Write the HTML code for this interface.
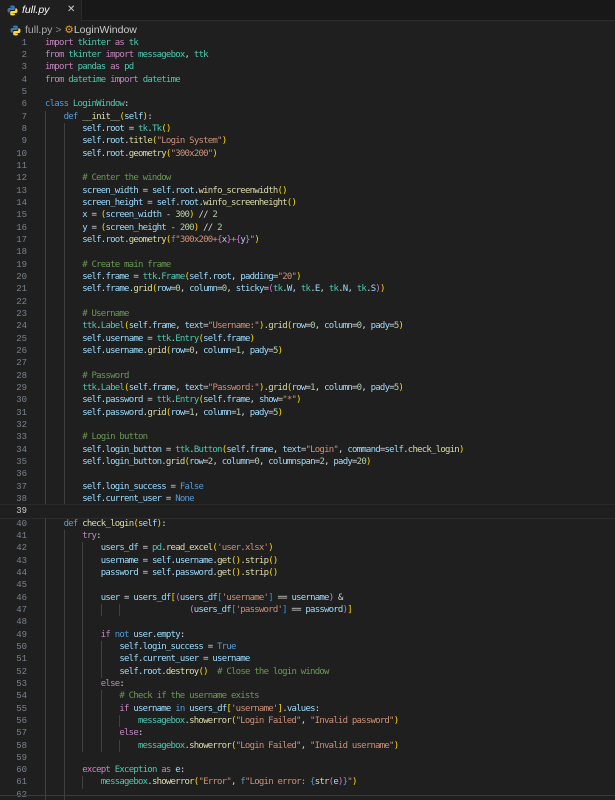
<!DOCTYPE html>
<html><head><meta charset="utf-8"><style>
*{margin:0;padding:0;box-sizing:border-box}
html,body{width:615px;height:800px;overflow:hidden;background:#1f1f1f}
body{font-family:"DejaVu Sans Mono","Liberation Mono",monospace;font-size:9px;letter-spacing:-0.77px;color:#d4d4d4;position:relative}
.tabs{position:absolute;left:0;top:0;width:615px;height:21px;background:#181818;border-bottom:1px solid #2b2b2b}
.tab{position:absolute;left:0;top:0;width:82px;height:22px;background:#1f1f1f;border-right:1px solid #2b2b2b;font-family:"Liberation Sans",sans-serif;font-style:italic;font-size:10.5px;letter-spacing:0;color:#fff}
.tab span{position:absolute;left:22px;top:4px}
.tab b{position:absolute;left:67px;top:4px;font-style:normal;font-weight:normal;color:#ccc;font-size:10px}
.crumb{position:absolute;left:10px;top:24px;font-family:"Liberation Sans",sans-serif;font-size:10.5px;letter-spacing:0;color:#a9a9a9}
.code{position:absolute;left:0;top:36.8px;width:615px}
.l{height:12.34px;line-height:12.34px;white-space:pre;position:relative}
.l.cur{outline:1px solid #2b2b2b}
.n{display:inline-block;width:27px;text-align:right;color:#7a828c;margin-right:18px;letter-spacing:0;font-size:9px;font-family:"Liberation Mono",monospace}
.cur .n{color:#ccc}
u{display:inline-block;width:18.6px;height:12.34px;vertical-align:top;text-decoration:none;box-shadow:inset 1px 0 #404040}
.k{color:#c586c0}.b{color:#569cd6}.s{color:#9cdcfe}.f{color:#dcdcaa}.c{color:#4ec9b0}.t{color:#ce9178}.m{color:#6a9955}.nu{color:#b5cea8}.y{color:#ffd700}.p{color:#da70d6}.q{color:#179fff}
.bot{position:absolute;left:0;top:795px;width:615px;height:1px;background:#3a3a3a}
</style></head><body>
<div class="tabs"><div class="tab">
<svg style="position:absolute;left:7px;top:5px" width="11" height="11" viewBox="0 0 11 11"><path d="M5.3 0.5C3 0.5 3.1 1.5 3.1 1.5V2.6H5.4V3H2.1C2.1 3 0.5 2.8 0.5 5.3C0.5 7.7 1.9 7.6 1.9 7.6H2.7V6.4C2.7 6.4 2.6 5 4.1 5H6.4C6.4 5 7.8 5 7.8 3.7V1.7C7.8 1.7 8 0.5 5.3 0.5Z" fill="#3c78aa"/><path d="M5.7 10.5C8 10.5 7.9 9.5 7.9 9.5V8.4H5.6V8H8.9C8.9 8 10.5 8.2 10.5 5.7C10.5 3.3 9.1 3.4 9.1 3.4H8.3V4.6C8.3 4.6 8.4 6 6.9 6H4.6C4.6 6 3.2 6 3.2 7.3V9.3C3.2 9.3 3 10.5 5.7 10.5Z" fill="#fdd835"/></svg>
<span>full.py</span><b>✕</b></div></div>
<div class="crumb"><svg style="position:absolute;left:0;top:1px" width="11" height="11" viewBox="0 0 11 11"><path d="M5.3 0.5C3 0.5 3.1 1.5 3.1 1.5V2.6H5.4V3H2.1C2.1 3 0.5 2.8 0.5 5.3C0.5 7.7 1.9 7.6 1.9 7.6H2.7V6.4C2.7 6.4 2.6 5 4.1 5H6.4C6.4 5 7.8 5 7.8 3.7V1.7C7.8 1.7 8 0.5 5.3 0.5Z" fill="#3c78aa"/><path d="M5.7 10.5C8 10.5 7.9 9.5 7.9 9.5V8.4H5.6V8H8.9C8.9 8 10.5 8.2 10.5 5.7C10.5 3.3 9.1 3.4 9.1 3.4H8.3V4.6C8.3 4.6 8.4 6 6.9 6H4.6C4.6 6 3.2 6 3.2 7.3V9.3C3.2 9.3 3 10.5 5.7 10.5Z" fill="#fdd835"/></svg><span style="margin-left:15px">full.py</span> <span style="color:#888">&gt;</span> <span style="color:#ee9d28">⚙</span><span style="color:#ccc">LoginWindow</span></div>
<div class="code">
<div class="l"><span class="n">1</span><span class="k">import</span> <span class="c">tkinter</span> <span class="k">as</span> <span class="c">tk</span></div>
<div class="l"><span class="n">2</span><span class="k">from</span> <span class="c">tkinter</span> <span class="k">import</span> <span class="c">messagebox</span>, <span class="c">ttk</span></div>
<div class="l"><span class="n">3</span><span class="k">import</span> <span class="c">pandas</span> <span class="k">as</span> <span class="c">pd</span></div>
<div class="l"><span class="n">4</span><span class="k">from</span> <span class="c">datetime</span> <span class="k">import</span> <span class="c">datetime</span></div>
<div class="l"><span class="n">5</span></div>
<div class="l"><span class="n">6</span><span class="b">class</span> <span class="c">LoginWindow</span>:</div>
<div class="l"><span class="n">7</span><u></u><span class="b">def</span> <span class="f">__init__</span><span class="y">(</span><span class="s">self</span><span class="y">)</span>:</div>
<div class="l"><span class="n">8</span><u></u><u></u><span class="s">self</span>.<span class="s">root</span> = <span class="c">tk</span>.<span class="c">Tk</span><span class="y">()</span></div>
<div class="l"><span class="n">9</span><u></u><u></u><span class="s">self</span>.<span class="s">root</span>.<span class="f">title</span><span class="y">(</span><span class="t">"Login System"</span><span class="y">)</span></div>
<div class="l"><span class="n">10</span><u></u><u></u><span class="s">self</span>.<span class="s">root</span>.<span class="f">geometry</span><span class="y">(</span><span class="t">"300x200"</span><span class="y">)</span></div>
<div class="l"><span class="n">11</span><u></u><u></u></div>
<div class="l"><span class="n">12</span><u></u><u></u><span class="m"># Center the window</span></div>
<div class="l"><span class="n">13</span><u></u><u></u><span class="s">screen_width</span> = <span class="s">self</span>.<span class="s">root</span>.<span class="f">winfo_screenwidth</span><span class="y">()</span></div>
<div class="l"><span class="n">14</span><u></u><u></u><span class="s">screen_height</span> = <span class="s">self</span>.<span class="s">root</span>.<span class="f">winfo_screenheight</span><span class="y">()</span></div>
<div class="l"><span class="n">15</span><u></u><u></u><span class="s">x</span> = <span class="y">(</span><span class="s">screen_width</span> - <span class="nu">300</span><span class="y">)</span> // <span class="nu">2</span></div>
<div class="l"><span class="n">16</span><u></u><u></u><span class="s">y</span> = <span class="y">(</span><span class="s">screen_height</span> - <span class="nu">200</span><span class="y">)</span> // <span class="nu">2</span></div>
<div class="l"><span class="n">17</span><u></u><u></u><span class="s">self</span>.<span class="s">root</span>.<span class="f">geometry</span><span class="y">(</span><span class="b">f</span><span class="t">"300x200+</span><span class="p">{</span><span class="s">x</span><span class="p">}</span><span class="t">+</span><span class="p">{</span><span class="s">y</span><span class="p">}</span><span class="t">"</span><span class="y">)</span></div>
<div class="l"><span class="n">18</span><u></u><u></u></div>
<div class="l"><span class="n">19</span><u></u><u></u><span class="m"># Create main frame</span></div>
<div class="l"><span class="n">20</span><u></u><u></u><span class="s">self</span>.<span class="s">frame</span> = <span class="c">ttk</span>.<span class="c">Frame</span><span class="y">(</span><span class="s">self</span>.<span class="s">root</span>, <span class="s">padding</span>=<span class="t">"20"</span><span class="y">)</span></div>
<div class="l"><span class="n">21</span><u></u><u></u><span class="s">self</span>.<span class="s">frame</span>.<span class="f">grid</span><span class="y">(</span><span class="s">row</span>=<span class="nu">0</span>, <span class="s">column</span>=<span class="nu">0</span>, <span class="s">sticky</span>=<span class="p">(</span><span class="c">tk</span>.<span class="s">W</span>, <span class="c">tk</span>.<span class="s">E</span>, <span class="c">tk</span>.<span class="s">N</span>, <span class="c">tk</span>.<span class="s">S</span><span class="p">)</span><span class="y">)</span></div>
<div class="l"><span class="n">22</span><u></u><u></u></div>
<div class="l"><span class="n">23</span><u></u><u></u><span class="m"># Username</span></div>
<div class="l"><span class="n">24</span><u></u><u></u><span class="c">ttk</span>.<span class="c">Label</span><span class="y">(</span><span class="s">self</span>.<span class="s">frame</span>, <span class="s">text</span>=<span class="t">"Username:"</span><span class="y">)</span>.<span class="f">grid</span><span class="y">(</span><span class="s">row</span>=<span class="nu">0</span>, <span class="s">column</span>=<span class="nu">0</span>, <span class="s">pady</span>=<span class="nu">5</span><span class="y">)</span></div>
<div class="l"><span class="n">25</span><u></u><u></u><span class="s">self</span>.<span class="s">username</span> = <span class="c">ttk</span>.<span class="c">Entry</span><span class="y">(</span><span class="s">self</span>.<span class="s">frame</span><span class="y">)</span></div>
<div class="l"><span class="n">26</span><u></u><u></u><span class="s">self</span>.<span class="s">username</span>.<span class="f">grid</span><span class="y">(</span><span class="s">row</span>=<span class="nu">0</span>, <span class="s">column</span>=<span class="nu">1</span>, <span class="s">pady</span>=<span class="nu">5</span><span class="y">)</span></div>
<div class="l"><span class="n">27</span><u></u><u></u></div>
<div class="l"><span class="n">28</span><u></u><u></u><span class="m"># Password</span></div>
<div class="l"><span class="n">29</span><u></u><u></u><span class="c">ttk</span>.<span class="c">Label</span><span class="y">(</span><span class="s">self</span>.<span class="s">frame</span>, <span class="s">text</span>=<span class="t">"Password:"</span><span class="y">)</span>.<span class="f">grid</span><span class="y">(</span><span class="s">row</span>=<span class="nu">1</span>, <span class="s">column</span>=<span class="nu">0</span>, <span class="s">pady</span>=<span class="nu">5</span><span class="y">)</span></div>
<div class="l"><span class="n">30</span><u></u><u></u><span class="s">self</span>.<span class="s">password</span> = <span class="c">ttk</span>.<span class="c">Entry</span><span class="y">(</span><span class="s">self</span>.<span class="s">frame</span>, <span class="s">show</span>=<span class="t">"*"</span><span class="y">)</span></div>
<div class="l"><span class="n">31</span><u></u><u></u><span class="s">self</span>.<span class="s">password</span>.<span class="f">grid</span><span class="y">(</span><span class="s">row</span>=<span class="nu">1</span>, <span class="s">column</span>=<span class="nu">1</span>, <span class="s">pady</span>=<span class="nu">5</span><span class="y">)</span></div>
<div class="l"><span class="n">32</span><u></u><u></u></div>
<div class="l"><span class="n">33</span><u></u><u></u><span class="m"># Login button</span></div>
<div class="l"><span class="n">34</span><u></u><u></u><span class="s">self</span>.<span class="s">login_button</span> = <span class="c">ttk</span>.<span class="c">Button</span><span class="y">(</span><span class="s">self</span>.<span class="s">frame</span>, <span class="s">text</span>=<span class="t">"Login"</span>, <span class="s">command</span>=<span class="s">self</span>.<span class="f">check_login</span><span class="y">)</span></div>
<div class="l"><span class="n">35</span><u></u><u></u><span class="s">self</span>.<span class="s">login_button</span>.<span class="f">grid</span><span class="y">(</span><span class="s">row</span>=<span class="nu">2</span>, <span class="s">column</span>=<span class="nu">0</span>, <span class="s">columnspan</span>=<span class="nu">2</span>, <span class="s">pady</span>=<span class="nu">20</span><span class="y">)</span></div>
<div class="l"><span class="n">36</span><u></u><u></u></div>
<div class="l"><span class="n">37</span><u></u><u></u><span class="s">self</span>.<span class="s">login_success</span> = <span class="b">False</span></div>
<div class="l"><span class="n">38</span><u></u><u></u><span class="s">self</span>.<span class="s">current_user</span> = <span class="b">None</span></div>
<div class="l cur"><span class="n">39</span></div>
<div class="l"><span class="n">40</span><u></u><span class="b">def</span> <span class="f">check_login</span><span class="y">(</span><span class="s">self</span><span class="y">)</span>:</div>
<div class="l"><span class="n">41</span><u></u><u></u><span class="k">try</span>:</div>
<div class="l"><span class="n">42</span><u></u><u></u><u></u><span class="s">users_df</span> = <span class="c">pd</span>.<span class="f">read_excel</span><span class="y">(</span><span class="t">'user.xlsx'</span><span class="y">)</span></div>
<div class="l"><span class="n">43</span><u></u><u></u><u></u><span class="s">username</span> = <span class="s">self</span>.<span class="s">username</span>.<span class="f">get</span><span class="y">()</span>.<span class="f">strip</span><span class="y">()</span></div>
<div class="l"><span class="n">44</span><u></u><u></u><u></u><span class="s">password</span> = <span class="s">self</span>.<span class="s">password</span>.<span class="f">get</span><span class="y">()</span>.<span class="f">strip</span><span class="y">()</span></div>
<div class="l"><span class="n">45</span><u></u><u></u><u></u></div>
<div class="l"><span class="n">46</span><u></u><u></u><u></u><span class="s">user</span> = <span class="s">users_df</span><span class="y">[</span><span class="p">(</span><span class="s">users_df</span><span class="q">[</span><span class="t">'username'</span><span class="q">]</span> == <span class="s">username</span><span class="p">)</span> &amp;</div>
<div class="l"><span class="n">47</span><u></u><u></u><u></u><u></u><u></u>           <span class="p">(</span><span class="s">users_df</span><span class="q">[</span><span class="t">'password'</span><span class="q">]</span> == <span class="s">password</span><span class="p">)</span><span class="y">]</span></div>
<div class="l"><span class="n">48</span><u></u><u></u><u></u></div>
<div class="l"><span class="n">49</span><u></u><u></u><u></u><span class="k">if</span> <span class="b">not</span> <span class="s">user</span>.<span class="s">empty</span>:</div>
<div class="l"><span class="n">50</span><u></u><u></u><u></u><u></u><span class="s">self</span>.<span class="s">login_success</span> = <span class="b">True</span></div>
<div class="l"><span class="n">51</span><u></u><u></u><u></u><u></u><span class="s">self</span>.<span class="s">current_user</span> = <span class="s">username</span></div>
<div class="l"><span class="n">52</span><u></u><u></u><u></u><u></u><span class="s">self</span>.<span class="s">root</span>.<span class="f">destroy</span><span class="y">()</span>  <span class="m"># Close the login window</span></div>
<div class="l"><span class="n">53</span><u></u><u></u><u></u><span class="k">else</span>:</div>
<div class="l"><span class="n">54</span><u></u><u></u><u></u><u></u><span class="m"># Check if the username exists</span></div>
<div class="l"><span class="n">55</span><u></u><u></u><u></u><u></u><span class="k">if</span> <span class="s">username</span> <span class="b">in</span> <span class="s">users_df</span><span class="y">[</span><span class="t">'username'</span><span class="y">]</span>.<span class="s">values</span>:</div>
<div class="l"><span class="n">56</span><u></u><u></u><u></u><u></u><u></u><span class="c">messagebox</span>.<span class="f">showerror</span><span class="y">(</span><span class="t">"Login Failed"</span>, <span class="t">"Invalid password"</span><span class="y">)</span></div>
<div class="l"><span class="n">57</span><u></u><u></u><u></u><u></u><span class="k">else</span>:</div>
<div class="l"><span class="n">58</span><u></u><u></u><u></u><u></u><u></u><span class="c">messagebox</span>.<span class="f">showerror</span><span class="y">(</span><span class="t">"Login Failed"</span>, <span class="t">"Invalid username"</span><span class="y">)</span></div>
<div class="l"><span class="n">59</span><u></u><u></u></div>
<div class="l"><span class="n">60</span><u></u><u></u><span class="k">except</span> <span class="c">Exception</span> <span class="k">as</span> <span class="s">e</span>:</div>
<div class="l"><span class="n">61</span><u></u><u></u><u></u><span class="c">messagebox</span>.<span class="f">showerror</span><span class="y">(</span><span class="t">"Error"</span>, <span class="b">f</span><span class="t">"Login error: </span><span class="b">{</span><span class="f">str</span><span class="p">(</span><span class="s">e</span><span class="p">)</span><span class="b">}</span><span class="t">"</span><span class="y">)</span></div>
<div class="l"><span class="n">62</span><u></u><u></u></div>
</div>
<div class="bot"></div>
</body></html>
